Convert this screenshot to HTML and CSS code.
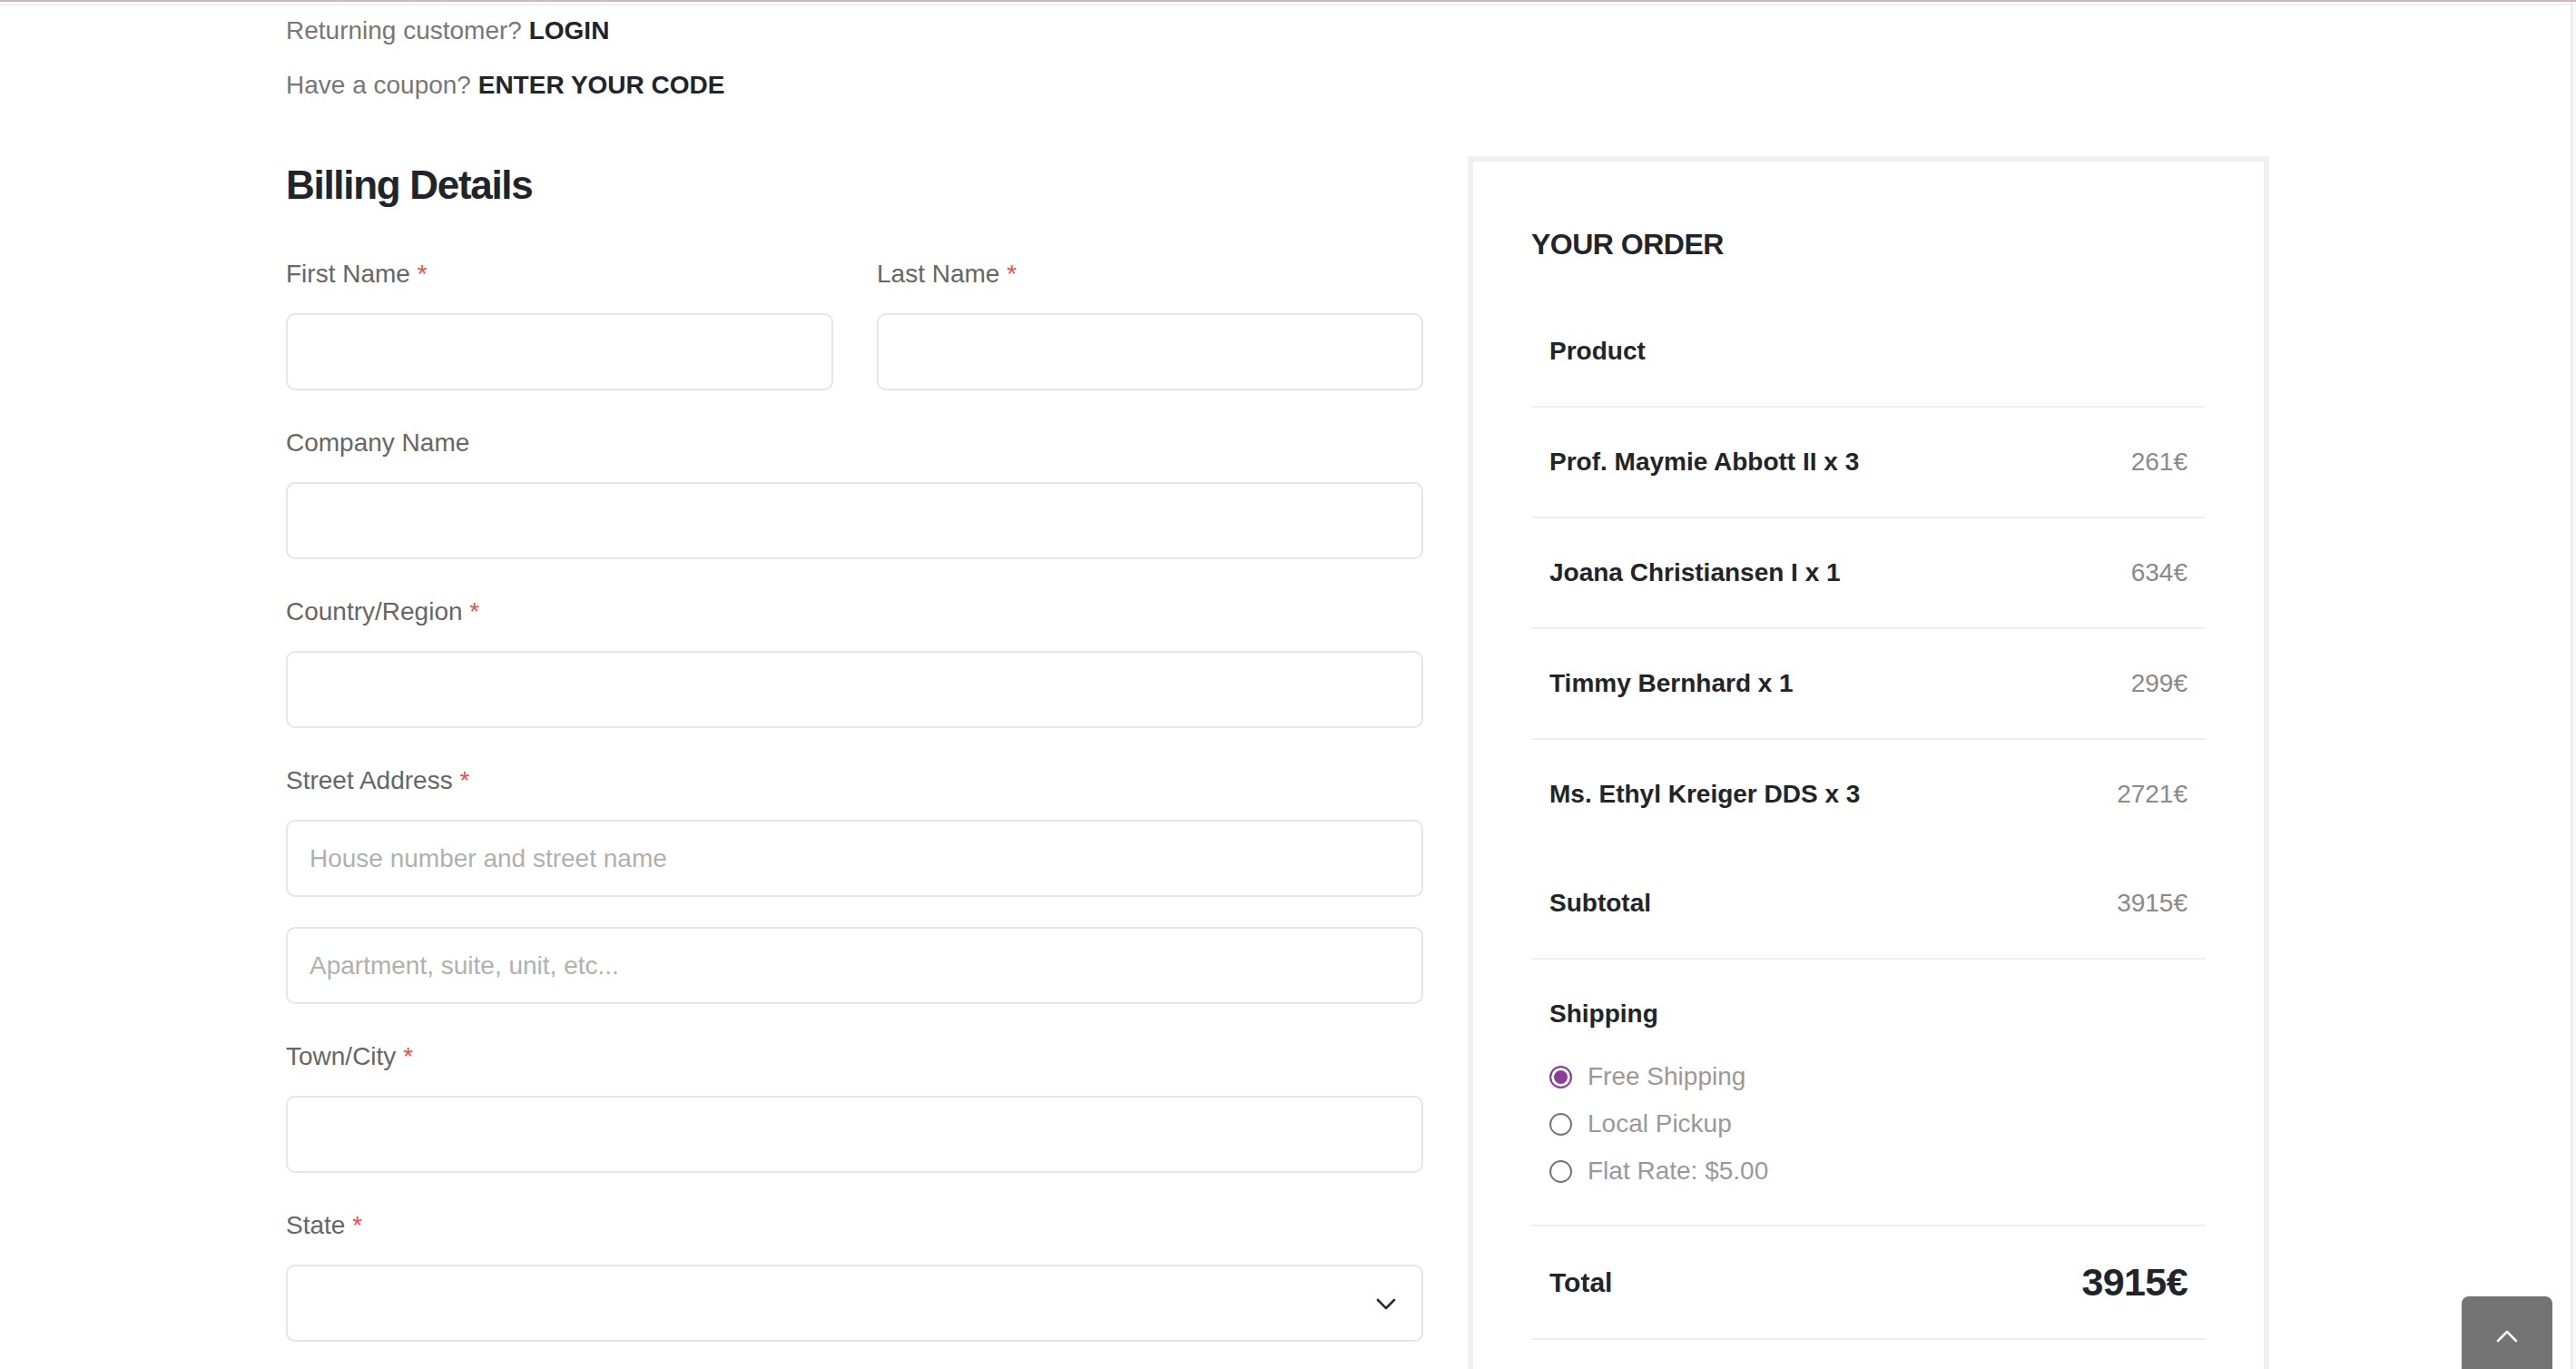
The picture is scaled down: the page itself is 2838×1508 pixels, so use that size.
FILE: index.html
```html
<!DOCTYPE html>
<html lang="en">
<head>
<meta charset="utf-8">
<title>Checkout</title>
<link rel="stylesheet" href="styles.css">
</head>
<body>
<div class="topbar"></div>
<div class="topline"></div>
<main class="page">
  <section class="intro">
    <p>Returning customer? <a href="#">LOGIN</a></p>
    <p>Have a coupon? <a href="#">ENTER YOUR CODE</a></p>
  </section>

  <div class="checkout">
    <form class="billing">
      <h2>Billing Details</h2>

      <div class="row2">
        <div class="field">
          <label>First Name <span class="req">*</span></label>
          <input class="input" type="text">
        </div>
        <div class="field">
          <label>Last Name <span class="req">*</span></label>
          <input class="input" type="text">
        </div>
      </div>

      <div class="field">
        <label>Company Name</label>
        <input class="input" type="text">
      </div>

      <div class="field">
        <label>Country/Region <span class="req">*</span></label>
        <input class="input" type="text">
      </div>

      <div class="field">
        <label>Street Address <span class="req">*</span></label>
        <input class="input" type="text" placeholder="House number and street name">
        <input class="input input-extra" type="text" placeholder="Apartment, suite, unit, etc...">
      </div>

      <div class="field">
        <label>Town/City <span class="req">*</span></label>
        <input class="input" type="text">
      </div>

      <div class="field">
        <label>State <span class="req">*</span></label>
        <div class="select-wrap">
          <select class="input select"><option></option></select>
          <svg class="chev" width="22" height="13" viewBox="0 0 22 13"><polyline points="2,2 11,11 20,2" fill="none" stroke="#2b2b2b" stroke-width="2.6" stroke-linecap="round" stroke-linejoin="round"/></svg>
        </div>
      </div>
    </form>

    <aside class="order">
      <h3>YOUR ORDER</h3>
      <div class="o-row o-head"><span>Product</span></div>
      <div class="o-row"><span class="o-name">Prof. Maymie Abbott II x 3</span><span class="o-price">261€</span></div>
      <div class="o-row"><span class="o-name">Joana Christiansen I x 1</span><span class="o-price">634€</span></div>
      <div class="o-row"><span class="o-name">Timmy Bernhard x 1</span><span class="o-price">299€</span></div>
      <div class="o-row no-border"><span class="o-name">Ms. Ethyl Kreiger DDS x 3</span><span class="o-price">2721€</span></div>
      <div class="o-row"><span class="o-name">Subtotal</span><span class="o-price">3915€</span></div>
      <div class="o-row o-ship">
        <span class="o-name">Shipping</span>
        <ul class="ship-list">
          <li><label><input type="radio" name="ship" checked>Free Shipping</label></li>
          <li><label><input type="radio" name="ship">Local Pickup</label></li>
          <li><label><input type="radio" name="ship">Flat Rate: $5.00</label></li>
        </ul>
      </div>
      <div class="o-row o-total"><span class="o-name">Total</span><span class="o-sum">3915€</span></div>
      <div class="o-more"></div>
    </aside>
  </div>
</main>

<div class="scrollbar"></div>
<a class="to-top" href="#"><svg width="24" height="14" viewBox="0 0 24 14"><polyline points="2,12 12,2 22,12" fill="none" stroke="#ffffff" stroke-width="2.6" stroke-linecap="round" stroke-linejoin="round"/></svg></a>
</body>
</html>
```

FILE: styles.css
```css
html {
  overflow: hidden;
}

body {
  margin: 0;
  background: #ffffff;
  font-family: "Liberation Sans", Arial, Helvetica, sans-serif;
  font-size: 28px;
  color: #212529;
}

.topbar {
  height: 2px;
  background: #cfb6be;
}

.topline {
  height: 2px;
  margin-top: 2px;
  background: #f0f0f0;
}

.page {
  padding-left: 315px;
}

.intro {
  padding-top: 8px;
}

.intro p {
  margin: 0;
  line-height: 40px;
  color: #777777;
}

.intro p + p {
  margin-top: 20px;
}

.intro a {
  color: #212529;
  font-weight: 700;
  text-decoration: none;
}

.checkout {
  display: grid;
  grid-template-columns: 1253px 883px;
  column-gap: 49px;
  align-items: start;
  margin-top: 58px;
}

/* Billing form */
.billing h2 {
  margin: 0 0 47px;
  font-size: 44px;
  line-height: 63px;
  font-weight: 700;
  letter-spacing: -1.3px;
  color: #212529;
}

.row2 {
  display: grid;
  grid-template-columns: 603px 602px;
  column-gap: 48px;
}

.field {
  display: flex;
  flex-direction: column;
  margin-bottom: 38px;
}

.field label {
  display: block;
  line-height: 40px;
  margin-bottom: 23px;
  color: #666666;
}

.req {
  color: #e8534a;
}

.input {
  box-sizing: border-box;
  width: 100%;
  height: 85px;
  margin: 0;
  padding: 0 24px;
  border: 2px solid #e6e6e6;
  border-radius: 10px;
  background: #ffffff;
  font-family: inherit;
  font-size: 28px;
  color: #333333;
  outline: none;
}

.input::placeholder {
  color: #b0b0b0;
}

.input-extra {
  margin-top: 33px;
}

.select-wrap {
  position: relative;
}

.select {
  appearance: none;
  -webkit-appearance: none;
}

.chev {
  position: absolute;
  right: 30px;
  top: 37px;
}

/* Order box */
.order {
  box-sizing: border-box;
  border: 6px solid #f0f0f0;
  padding: 71px 64px 60px;
  min-height: 1500px;
}

.order h3 {
  margin: 0 0 38px;
  font-size: 32px;
  line-height: 40px;
  font-weight: 700;
  letter-spacing: -0.5px;
  color: #212529;
}

.o-row {
  display: flex;
  justify-content: space-between;
  align-items: center;
  padding: 40px 20px;
  line-height: 40px;
  border-bottom: 2px solid #efefef;
}

.o-row.no-border {
  border-bottom: none;
}

.o-head,
.o-name {
  font-weight: 700;
  color: #212529;
}

.o-price {
  color: #8a8a8a;
}

.o-ship {
  display: block;
  padding-bottom: 33px;
}

.o-ship .o-name {
  display: block;
}

.ship-list {
  list-style: none;
  margin: 23px 0 0;
  padding: 0;
}

.ship-list li {
  height: 52px;
  display: flex;
  align-items: center;
}

.ship-list label {
  display: flex;
  align-items: center;
  gap: 17px;
  color: #999999;
}

.ship-list input {
  appearance: none;
  -webkit-appearance: none;
  box-sizing: border-box;
  width: 25px;
  height: 25px;
  margin: 0;
  border: 2px solid #767676;
  border-radius: 50%;
  background: #ffffff;
}

.ship-list input:checked {
  border-color: #8b3f94;
  background: #8b3f94;
  box-shadow: inset 0 0 0 3px #ffffff;
}

.o-total {
  line-height: 43px;
}

.o-total .o-name {
  font-size: 30px;
}

.o-sum {
  font-size: 43px;
  font-weight: 700;
  letter-spacing: -0.6px;
  color: #212529;
}

.o-more {
  height: 200px;
}

/* Overlays */
.scrollbar {
  position: fixed;
  top: 2px;
  right: 0;
  bottom: 0;
  width: 4px;
  background: #f8f8f8;
  border-left: 2px solid #e8e8e8;
}

.to-top {
  position: fixed;
  right: 26px;
  bottom: -20px;
  width: 100px;
  height: 100px;
  box-sizing: border-box;
  padding-top: 37px;
  display: flex;
  justify-content: center;
  align-items: flex-start;
  background: #737373;
  border-radius: 8px 8px 0 0;
}
```
